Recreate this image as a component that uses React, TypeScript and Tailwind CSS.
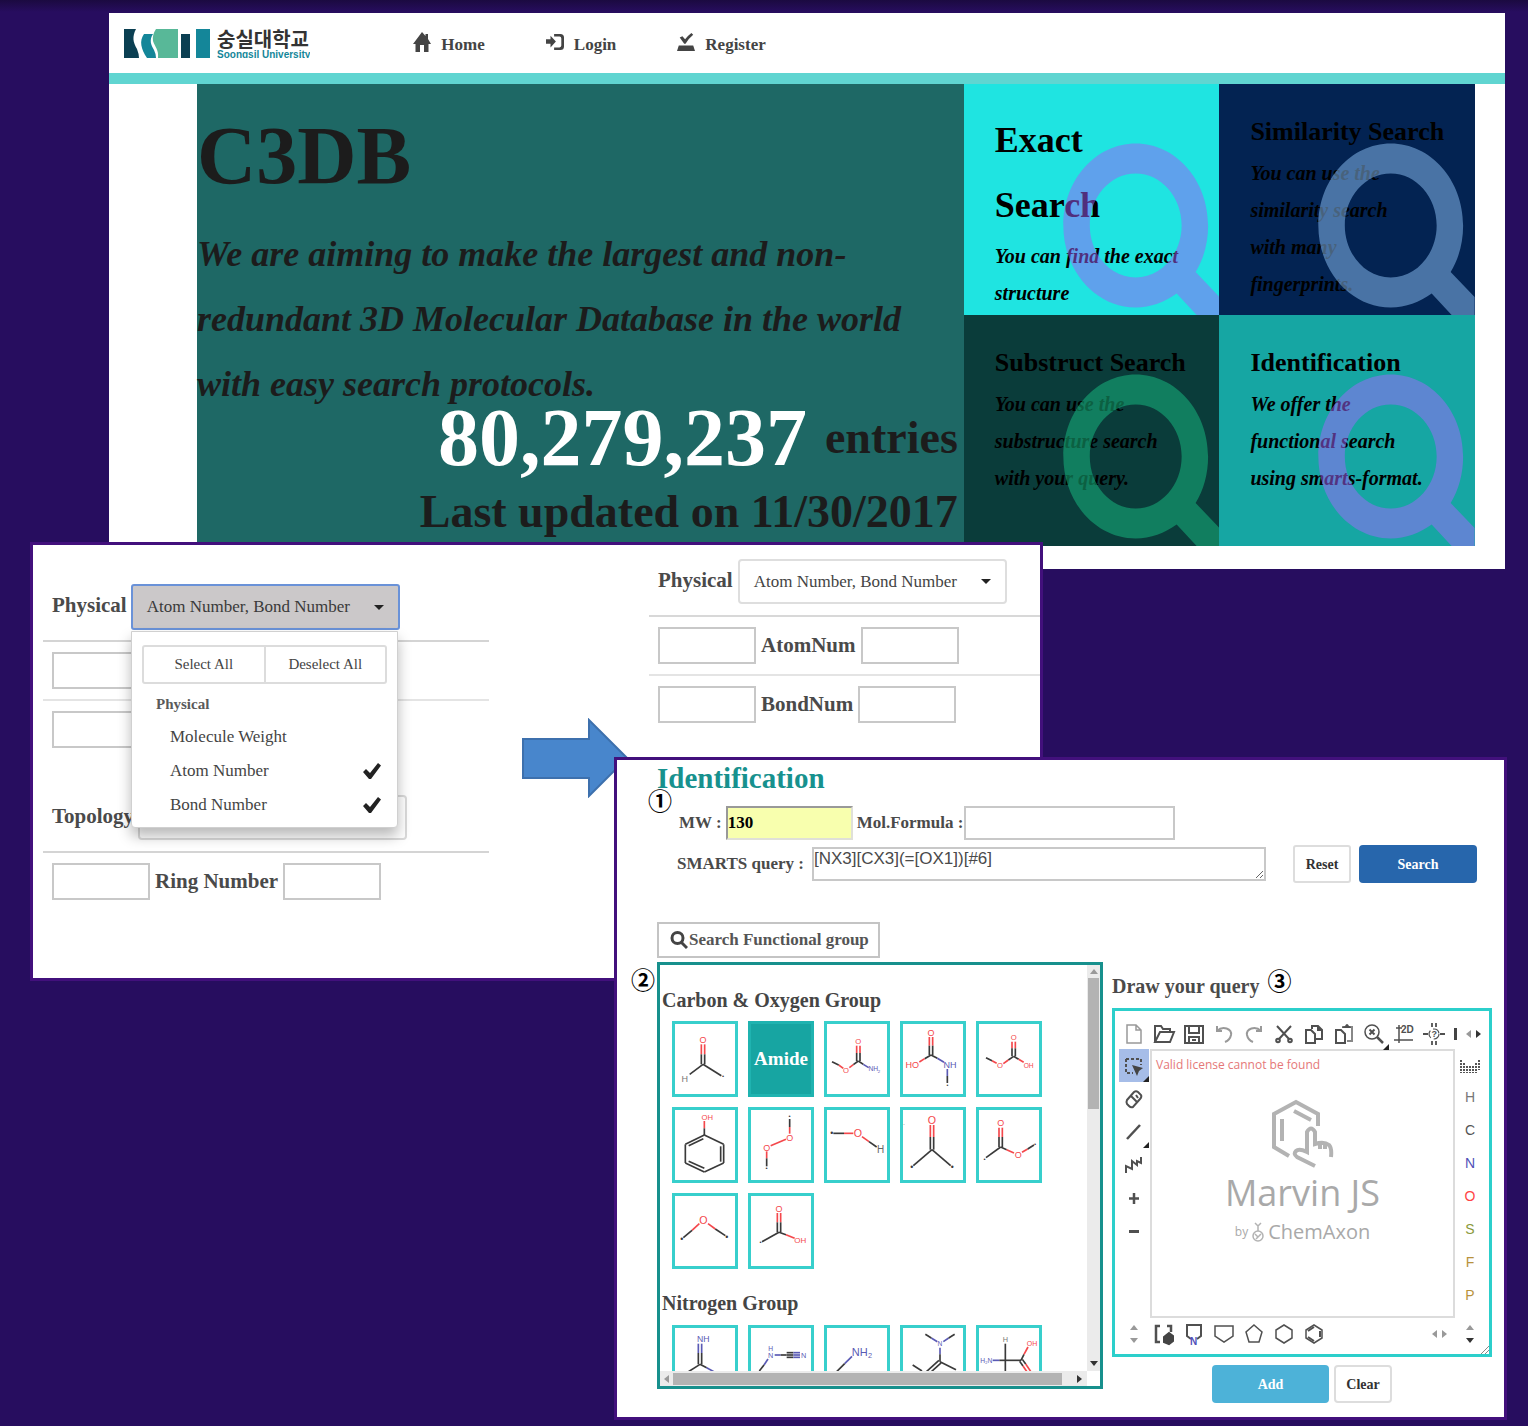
import React from "react";

const RED = "#f4484c";
const INK = "#3a3a3a";
const BLUE = "#5a5ab4";
const serif = "font-['Liberation_Serif','Noto_Sans_CJK_KR',serif]";

type Bond = [number, number, number, number, string, (1 | 2 | 3)?];
type Atom = [number, number, string, string, number?];
type Mol = { bonds: Bond[]; atoms: Atom[] };

const MOLS: Record<string, Mol> = {
  aldehyde: {
    bonds: [[93, 70, 93, 100, RED, 2], [93, 100, 93, 130, INK, 2], [93, 130, 53, 160, INK], [93, 130, 148, 164, INK]],
    atoms: [[93, 56, "O", RED], [38, 172, "H", "#777"], [153, 166, "•", INK, 18]],
  },
  carbamate: {
    bonds: [[103, 74, 103, 96, RED, 2], [103, 96, 103, 120, INK, 2], [103, 120, 88, 131, INK], [88, 131, 76, 140, RED], [58, 142, 44, 132, RED], [44, 132, 24, 122, INK], [103, 120, 118, 130, INK], [118, 130, 134, 140, BLUE]],
    atoms: [[103, 62, "O", RED, 23], [66, 149, "O", RED, 23], [148, 144, "NH", BLUE, 20], [165, 151, "2", BLUE, 13]],
  },
  carbamic: {
    bonds: [[93, 48, 93, 74, RED, 2], [93, 74, 93, 102, INK, 2], [93, 102, 74, 113, INK], [74, 113, 58, 123, RED], [93, 102, 112, 112, INK], [112, 112, 132, 124, BLUE], [142, 144, 142, 165, BLUE], [142, 165, 142, 186, INK]],
    atoms: [[93, 36, "O", RED], [37, 132, "HO", RED], [150, 132, "NH", BLUE], [142, 191, "•", INK, 16]],
  },
  carbonate: {
    bonds: [[113, 62, 113, 82, RED, 2], [113, 82, 113, 106, INK, 2], [113, 106, 97, 117, INK], [97, 117, 82, 128, RED], [62, 127, 48, 119, RED], [48, 119, 30, 110, INK], [113, 106, 128, 115, INK], [128, 115, 143, 124, RED]],
    atoms: [[113, 50, "O", RED, 23], [72, 134, "O", RED, 23], [158, 134, "OH", RED, 20]],
  },
  phenol: {
    bonds: [[97, 42, 97, 64, RED], [97, 64, 97, 84, INK], [97, 84, 155, 112, INK], [155, 112, 155, 168, INK], [155, 168, 97, 195, INK], [97, 195, 40, 168, INK], [40, 168, 40, 112, INK], [40, 112, 97, 84, INK], [94, 95, 50, 116, INK], [146, 118, 146, 164, INK], [50, 163, 97, 184, INK]],
    atoms: [[106, 31, "OH", RED, 23]],
  },
  peroxide: {
    bonds: [[125, 36, 125, 60, INK], [125, 60, 125, 80, RED], [114, 97, 68, 116, RED], [56, 133, 56, 154, RED], [56, 154, 56, 178, INK]],
    atoms: [[125, 92, "O", RED], [56, 121, "O", RED], [125, 27, "•", INK, 18], [56, 184, "•", INK, 18]],
  },
  alcohol: {
    bonds: [[28, 79, 60, 79, INK], [60, 79, 88, 79, RED], [114, 89, 135, 104, RED], [135, 104, 158, 120, INK]],
    atoms: [[102, 79, "O", RED, 32], [170, 128, "H", "#666", 30], [23, 79, "•", INK, 26]],
  },
  ketone: {
    bonds: [[96, 54, 96, 90, RED, 2], [96, 90, 96, 128, INK, 2], [96, 128, 40, 176, INK], [96, 128, 152, 176, INK]],
    atoms: [[96, 38, "O", RED, 32], [35, 180, "•", INK, 26], [157, 180, "•", INK, 26], [12, 52, "·", INK, 18]],
  },
  ester: {
    bonds: [[74, 62, 74, 90, RED, 2], [74, 90, 74, 120, INK, 2], [74, 120, 30, 152, INK], [74, 120, 92, 128, INK], [92, 128, 114, 138, RED], [138, 136, 155, 126, RED], [155, 126, 174, 114, INK]],
    atoms: [[74, 48, "O", RED], [127, 142, "O", RED], [26, 155, "•", INK, 18], [177, 112, "•", INK, 18]],
  },
  ether: {
    bonds: [[82, 92, 60, 112, RED], [60, 112, 34, 134, INK], [108, 92, 130, 108, RED], [130, 108, 160, 128, INK]],
    atoms: [[94, 82, "O", RED, 32], [29, 139, "•", INK, 26], [164, 131, "•", INK, 26]],
  },
  acid: {
    bonds: [[93, 60, 93, 88, RED, 2], [93, 88, 93, 118, INK, 2], [93, 118, 42, 146, INK], [93, 118, 114, 125, INK], [114, 125, 140, 136, RED]],
    atoms: [[93, 46, "O", RED], [157, 142, "OH", RED, 24], [38, 148, "•", INK, 18]],
  },
  imine: {
    bonds: [[84, 56, 84, 84, BLUE, 2], [84, 84, 84, 118, INK, 2], [84, 118, 40, 146, INK], [84, 118, 104, 128, INK], [104, 128, 136, 146, BLUE]],
    atoms: [[94, 42, "NH", BLUE, 26]],
  },
  cyanamide: {
    bonds: [[80, 90, 98, 90, BLUE], [98, 90, 116, 90, INK], [116, 90, 136, 90, INK, 3], [136, 90, 156, 90, BLUE, 3], [60, 102, 48, 120, BLUE], [48, 120, 34, 138, INK]],
    atoms: [[68, 70, "H", BLUE, 20], [68, 90, "N", BLUE, 22], [167, 90, "N", BLUE, 22]],
  },
  amine: {
    bonds: [[84, 94, 62, 116, BLUE], [62, 116, 38, 140, INK]],
    atoms: [[107, 82, "NH", BLUE, 33], [138, 91, "2", BLUE, 22]],
  },
  amidine: {
    bonds: [[112, 50, 94, 39, BLUE], [94, 39, 76, 28, INK], [130, 50, 146, 39, BLUE], [146, 39, 164, 28, INK], [120, 68, 120, 88, BLUE], [120, 88, 120, 110, INK], [120, 110, 168, 134, INK], [120, 110, 80, 146, INK, 2], [38, 120, 66, 138, INK]],
    atoms: [[120, 57, "N", BLUE, 20]],
  },
  aminoacid: {
    bonds: [[88, 56, 88, 146, INK], [50, 106, 70, 106, BLUE], [70, 106, 135, 106, INK], [135, 106, 144, 88, INK], [144, 88, 156, 66, RED], [135, 106, 145, 120, INK, 2], [145, 120, 160, 142, RED, 2]],
    atoms: [[88, 44, "H", "#777", 22], [31, 106, "H₂N", BLUE, 20], [168, 56, "OH", RED, 21]],
  },
};

function Molecule({ mol }: { mol: Mol }) {
  return (
    <svg viewBox="9 9 180 210" className="block size-full" aria-hidden="true">
      {mol.bonds.map(([x1, y1, x2, y2, c, n = 1], i) => {
        const len = Math.hypot(x2 - x1, y2 - y1);
        const nx = (y2 - y1) / len;
        const ny = (x1 - x2) / len;
        const offs = n === 1 ? [0] : n === 2 ? [-5, 5] : [-7, 0, 7];
        return offs.map((o) => (
          <line key={`${i}${o}`} x1={x1 + nx * o} y1={y1 + ny * o} x2={x2 + nx * o} y2={y2 + ny * o} stroke={c} strokeWidth={5} />
        ));
      })}
      {mol.atoms.map(([x, y, t, c, s = 27], i) => (
        <text key={i} x={x} y={y + s * 0.36} fill={c} fontSize={s} fontWeight="normal" fontFamily="Liberation Sans, sans-serif" textAnchor="middle">
          {t}
        </text>
      ))}
    </svg>
  );
}

function GroupGrid({ names }: { names: string[] }) {
  return (
    <div className="ml-[10px] grid w-max grid-cols-5 gap-[10px]">
      {names.map((n) =>
        n === "amide" ? (
          <button key={n} type="button" className="h-[76px] w-[66px] border-3 border-[#1fb3b0] bg-[#17a5a2] text-[19px] font-bold text-white">
            Amide
          </button>
        ) : (
          <button key={n} type="button" aria-label={n} className="h-[76px] w-[66px] border-3 border-[#38cfcc] bg-white">
            <Molecule mol={MOLS[n]} />
          </button>
        ),
      )}
    </div>
  );
}

function Lens({ color }: { color: string }) {
  return (
    <svg viewBox="0 0 256 231" preserveAspectRatio="none" className="pointer-events-none absolute inset-0 size-full" aria-hidden="true">
      <path
        fill={color}
        fillOpacity="0.5"
        fillRule="evenodd"
        d="M172 59.5C212 59.5 244.500 96 244.500 141.500C244.500 159 240 175 232 188L256 213V231H233L213 209.500C201 218 187 223.500 172 223.500C132 223.500 99.500 187 99.500 141.500C99.500 96 132 59.500 172 59.500ZM172 89.500C146.500 89.500 126 113 126 141.500C126 170 146.500 193.500 172 193.500C197.500 193.500 218 170 218 141.500C218 113 197.500 89.500 172 89.500Z"
      />
    </svg>
  );
}

function Tile({ bg, lens, title, big, lines }: { bg: string; lens: string; title: string; big?: boolean; lines: string[] }) {
  return (
    <a href="#search" className={`relative block overflow-hidden pt-6 pl-[31px] text-black ${bg}`}>
      <h2 className={big ? "w-32 text-[36px] leading-[65px] font-bold" : "text-[26px] leading-[47px] font-bold whitespace-nowrap"}>{title}</h2>
      <p className="text-[20px] leading-[37px] font-bold whitespace-nowrap italic">
        {lines.map((l) => (
          <span key={l} className="block">{l}</span>
        ))}
      </p>
      <Lens color={lens} />
    </a>
  );
}

function Hero() {
  return (
    <section className="mr-[23px] ml-[109px] bg-white pb-[23px]">
      <header className="flex h-[60px] items-center pl-[15px]">
        <a href="#top" className="flex items-start gap-[7px]">
          <svg viewBox="0 0 86 29" className="h-[29px] w-[86px]" aria-hidden="true">
            <path d="M0 0H12C8 8 9 13 13 20Q15 25 15 29H0Z" fill="#0b3f52" />
            <path d="M20 5H29C25 11 27 16 30 21Q32 25 32 29H23C17 20 15 12 20 5Z" fill="#148699" />
            <path d="M32 0H54V29H34C35 21 31 18 29 12Q28 6 32 0Z" fill="#58b898" />
            <path d="M57 5H66V29H57Z" fill="#0b3f52" />
            <path d="M72 0H86V29H72Z" fill="#148699" />
          </svg>
          <span className="block h-[29px] overflow-hidden">
            <span className="block font-['Noto_Sans_CJK_KR',sans-serif] text-[20px] leading-[19px] font-bold text-[#333]">숭실대학교</span>
            <span className="block font-['Liberation_Sans',sans-serif] text-[10px] leading-[14px] font-bold text-[#148699]">Soongsil University</span>
          </span>
        </a>
        <nav className="ml-[103px] flex gap-[61px] pt-[3px] text-[17px] font-bold text-[#444]">
          <a href="#home" className="flex items-center gap-[10px]">
            <svg viewBox="0 0 18 20" className="-mt-[5px] h-5 w-[18px]" fill="#444" aria-hidden="true">
              <path d="M9 0L12.500 4V2H15V7L18 12H15.500V20H11V13H7V20H2.500V12H0Z" />
            </svg>
            Home
          </a>
          <a href="#login" className="flex items-center gap-[10px]">
            <svg viewBox="0 0 20 20" className="-mt-[5px] h-[18px] w-[18px]" fill="#444" aria-hidden="true">
              <path d="M0 7H5V3L11 9.500L5 16V12H0ZM9 1H16Q20 1 20 5V15Q20 19 16 19H9V16H15Q17 16 17 14V6Q17 4 15 4H9Z" />
            </svg>
            Login
          </a>
          <a href="#register" className="flex items-center gap-[10px]">
            <svg viewBox="0 0 20 20" className="-mt-[5px] h-5 w-[18px]" fill="#444" aria-hidden="true">
              <path d="M3 5L6 3.500L9 7Q12 3 16 0L18 2Q13 6 9.500 12H8ZM2 14H18L20 20H0Z" />
            </svg>
            Register
          </a>
        </nav>
      </header>
      <div className="h-[11px] bg-[#60d5d1]" />
      <div className="mr-[30px] ml-[88px] grid grid-cols-[3fr_1fr_1fr] grid-rows-[231px_231px]">
        <div className="row-span-2 bg-[#1e6865] text-[#1c1c1c]">
          <h1 className="pt-[6px] text-[82px] leading-[132px] font-bold">C3DB</h1>
          <p className="text-[36px] leading-[65px] font-bold italic">
            We are aiming to make the largest and non-
            <br />
            redundant 3D Molecular Database in the world
            <br />
            with easy search protocols.
          </p>
          <div className="-mt-[24px] pr-[6px] text-right text-[46px] font-bold">
            <p className="flex items-center justify-end gap-[18px] leading-[90px]">
              <span className="text-[82px] text-white">80,279,237</span> entries
            </p>
            <p className="leading-[58px]">Last updated on 11/30/2017</p>
          </div>
        </div>
        <Tile bg="bg-[#1fe4e1]" lens="#a05ef7" title="Exact Search" big lines={["You can find the exact", "structure"]} />
        <Tile bg="bg-[#032352]" lens="#8fc3f8" title="Similarity Search" lines={["You can use the", "similarity search", "with many", "fingerprints."]} />
        <Tile bg="bg-[#0a3c3a]" lens="#18c084" title="Substruct Search" lines={["You can use the", "substructure search", "with your query."]} />
        <Tile bg="bg-[#16a6a3]" lens="#a466ff" title="Identification" lines={["We offer the", "functional search", "using smarts-format."]} />
      </div>
    </section>
  );
}

function Caret() {
  return (
    <svg viewBox="0 0 10 5" className="h-[5px] w-[10px]" aria-hidden="true">
      <path d="M0 0H10L5 5Z" fill="#222" />
    </svg>
  );
}

function NumBox({ label }: { label: string }) {
  return <input aria-label={label} className="h-[37px] w-[98px] border-2 border-[#c8c8c8] bg-white" />;
}

function RangeRow({ label, line, single }: { label: string; line?: boolean; single?: boolean }) {
  return (
    <div className={`flex items-center gap-[5px] py-[10px] pl-[9px] ${line ? "border-b-2 border-[#e4e4e4]" : ""}`}>
      <NumBox label={`${label} from`} />
      {!single && (
        <>
          <span className="text-[21px] font-bold text-[#4a4a4a]">{label}</span>
          <NumBox label={`${label} to`} />
        </>
      )}
    </div>
  );
}

function Tick() {
  return (
    <svg viewBox="0 0 18 16" className="h-4 w-[18px]" aria-hidden="true">
      <path d="M0 9L3 6L7 10L15 0L18 2.500L8 16H6Z" fill="#222" />
    </svg>
  );
}

function FilterPanel() {
  return (
    <section className="relative mr-[485px] -mt-[27px] ml-[30px] flex h-[439px] border-3 border-[#42107c] bg-white">
      <div className="ml-[10px] w-[446px]">
        <div className="relative flex items-center gap-1 border-b-2 border-[#d4d4d4] pt-[39px] pb-[10px] pl-[9px]">
          <span className="pb-[2px] text-[21px] font-bold text-[#4a4a4a]">Physical</span>
          <button type="button" aria-expanded="true" className="flex h-[46px] w-[269px] items-center justify-between rounded-[3px] border-2 border-[#6a92d8] bg-[#cbc8c9] px-[14px] text-[17px] text-[#3a3a3a]">
            Atom Number, Bond Number <Caret />
          </button>
          <div className="absolute top-[86px] left-[88px] z-10 h-[197px] w-[267px] rounded-b-[4px] border border-[#d0d0d0] bg-white pt-[13px] text-[#444] shadow-[0_8px_14px_rgba(0,0,0,0.28)]">
            <div className="mx-[10px] flex rounded-[3px] border-2 border-[#dcdcdc] text-[15px]">
              <button type="button" className="h-[35px] flex-1 border-r-2 border-[#dcdcdc]">Select All</button>
              <button type="button" className="h-[35px] flex-1">Deselect All</button>
            </div>
            <p className="mt-[9px] pl-6 text-[15px] leading-[22px] font-bold text-[#5a5a5a]">Physical</p>
            <ul className="mt-[5px] pr-[16px] pl-[38px] text-[17px] leading-[34px]">
              <li>Molecule Weight</li>
              <li className="flex items-center justify-between">Atom Number <Tick /></li>
              <li className="flex items-center justify-between">Bond Number <Tick /></li>
            </ul>
          </div>
        </div>
        <RangeRow label="Atom number" line single />
        <RangeRow label="Bond number" single />
        <div className="flex items-center gap-1 border-b-2 border-[#d4d4d4] pt-[37px] pb-[11px] pl-[9px]">
          <span className="pb-[2px] text-[21px] font-bold text-[#4a4a4a]">Topology</span>
          <button type="button" aria-label="Topology options" className="h-[45px] w-[269px] rounded-[4px] border-2 border-[#dadada] bg-white" />
        </div>
        <RangeRow label="Ring Number" />
      </div>
      <svg viewBox="0 0 106 80" className="mt-[173px] ml-[33px] h-20 w-[106px]" aria-hidden="true">
        <path d="M1 21H67V2L105 40L67 78V60H1Z" fill="#4886cc" stroke="#3d70ad" strokeWidth="2" />
      </svg>
      <div className="ml-[21px] flex-1">
        <div className="flex items-center gap-[5px] border-b-2 border-[#d8d8d8] pt-[14px] pb-[11px] pl-[9px]">
          <span className="pb-[2px] text-[21px] font-bold text-[#4a4a4a]">Physical</span>
          <button type="button" className="flex h-[45px] w-[269px] items-center justify-between rounded-[4px] border-2 border-[#dedede] bg-white px-[14px] text-[17px] text-[#444]">
            Atom Number, Bond Number <Caret />
          </button>
        </div>
        <RangeRow label="AtomNum" line />
        <RangeRow label="BondNum" />
      </div>
    </section>
  );
}

function Arrow({ dir, dark }: { dir: "u" | "d" | "l" | "r"; dark?: boolean }) {
  const d = { u: "M0 6H8L4 1Z", d: "M0 2H8L4 7Z", l: "M6 0V8L1 4Z", r: "M2 0V8L7 4Z" }[dir];
  return (
    <svg viewBox="0 0 8 8" className="size-2" aria-hidden="true">
      <path d={d} fill={dark ? "#333" : "#999"} />
    </svg>
  );
}

function GroupList() {
  return (
    <div className="grid h-[427px] w-[446px] grid-cols-[1fr_13px] grid-rows-[1fr_15px] border-3 border-[#17908d]">
      <div className="overflow-hidden pt-[23px] pl-[2px] text-[20px] leading-6 font-bold text-[#454545]">
        <h3 className="mb-[9px]">Carbon &amp; Oxygen Group</h3>
        <GroupGrid names={["aldehyde", "amide", "carbamate", "carbamic", "carbonate", "phenol", "peroxide", "alcohol", "ketone", "ester", "ether", "acid"]} />
        <h3 className="mt-[22px] mb-[10px]">Nitrogen Group</h3>
        <GroupGrid names={["imine", "cyanamide", "amine", "amidine", "aminoacid"]} />
      </div>
      <div className="flex flex-col items-center bg-[#ebebeb]">
        <span className="grid h-[13px] place-items-center"><Arrow dir="u" /></span>
        <span className="h-[131px] w-[11px] bg-[#b3b3b3]" />
        <span className="mt-auto mb-1"><Arrow dir="d" dark /></span>
      </div>
      <div className="flex items-center bg-[#ebebeb]">
        <span className="grid w-[13px] place-items-center"><Arrow dir="l" /></span>
        <span className="h-3 w-[389px] bg-[#b3b3b3]" />
        <span className="mr-1 ml-auto"><Arrow dir="r" dark /></span>
      </div>
    </div>
  );
}

function Tool({ label, children, on, corner }: { label: string; children: React.ReactNode; on?: boolean; corner?: boolean }) {
  return (
    <button type="button" aria-label={label} className={`relative grid h-[33px] w-[30px] shrink-0 place-items-center ${on ? "bg-[#a6bde8]" : ""}`}>
      <svg viewBox="0 0 24 24" className="size-6" fill="none" stroke="#505050" strokeWidth="2" aria-hidden="true">
        {children}
      </svg>
      {corner && <span className="absolute right-0 bottom-0 size-[6px] bg-[#222] [clip-path:polygon(100%_0,100%_100%,0_100%)]" />}
    </button>
  );
}

const elements: [string, string][] = [
  ["H", "text-[#777]"],
  ["C", "text-[#555]"],
  ["N", "text-[#5050b8]"],
  ["O", "text-[#f44]"],
  ["S", "text-[#8a9a3c]"],
  ["F", "text-[#b8923c]"],
  ["P", "text-[#b8923c]"],
];

function Sketcher() {
  return (
    <div className="relative grid h-[349px] w-[380px] grid-cols-[31px_1fr_30px] grid-rows-[38px_1fr_36px] border-3 border-[#2ccfcb] px-1">
      <div className="col-span-3 flex items-center pt-[7px]">
        <Tool label="New"><path d="M5 3H14L19 8V21H5ZM14 3V8H19" stroke="#999" strokeWidth="1.500" /></Tool>
        <Tool label="Open"><path d="M3 20V4H9L11 7H18V10M3 20L8 10H22L18 20Z" /></Tool>
        <Tool label="Save"><path d="M3 4H21V21H3ZM7 4V11H17V4M7 21V15H17V21M10 18H14" /></Tool>
        <Tool label="Undo"><path d="M5 4V9H10M5 9C11 3 20 7 19 13Q18 18 13 20" stroke="#999" /></Tool>
        <Tool label="Redo"><path d="M19 4V9H14M19 9C13 3 4 7 5 13Q6 18 11 20" stroke="#999" /></Tool>
        <Tool label="Cut"><path d="M5 4L17 17M19 4L7 17" /><circle cx="6" cy="18.500" r="1.800" /><circle cx="18" cy="18.500" r="1.800" /></Tool>
        <Tool label="Copy"><path d="M4 8H9L13 12V21H4ZM10 7V4H16L20 8V17H14M16 4V8H20" /></Tool>
        <Tool label="Paste"><path d="M4 8H9L13 12V21H4Z" /><path d="M8 5V5M10 5H20V19H15" stroke="#888" /><path d="M10 6Q11 4 13 4Q15 0 17 4Q19 4 19 6Z" fill="#505050" stroke="none" /></Tool>
        <Tool label="Zoom" corner><circle cx="10" cy="10" r="7" strokeWidth="1.500" /><path d="M7.500 7.500L12.500 12.500M12.500 7.500L7.500 12.500" /><path d="M15 15L21 21" strokeWidth="2.500" /></Tool>
        <Tool label="Clean 2D"><path d="M7 3V21M2 18H21M4 6H10" strokeWidth="1.500" /><text x="9" y="11" fontSize="10" fontFamily="Liberation Sans" fontWeight="bold" fill="#505050" stroke="none">2D</text></Tool>
        <Tool label="Check"><circle cx="12" cy="12" r="5" strokeWidth="1.200" strokeDasharray="8 3" /><path d="M1 12H6M18 12H23M10 1V5M14 1V5M10 19V23M14 19V23" strokeWidth="1.800" /><text x="9.500" y="15" fontSize="9" fontFamily="Liberation Sans" fill="#505050" stroke="none">?</text></Tool>
        <span className="ml-[5px] h-3 w-[3px] bg-[#444]" />
        <span className="ml-2 flex gap-[1px]"><Arrow dir="l" /><Arrow dir="r" dark /></span>
      </div>
      <div className="flex flex-col">
        <Tool label="Select" on corner><path d="M4 5H19V11M4 5V19H11" strokeDasharray="3 2" /><path d="M10 11L21 14L17 17L15 22Z" fill="#444" stroke="none" /></Tool>
        <Tool label="Erase"><path d="M5 13L12 5Q14 3.500 16 5L19 8Q20 10 18 12L11 20Q9 21 7 19L5 17Q4 15 5 13ZM9 9L15 15M14 8L16 11" /></Tool>
        <Tool label="Bond" corner><path d="M5 19L18 5" strokeWidth="2.500" /></Tool>
        <Tool label="Chain"><path d="M4 20V13L10 16V8L15 12V8L19 10V4" /></Tool>
        <Tool label="Increase charge"><path d="M12 7V18M7 12.500H17" strokeWidth="2.500" /></Tool>
        <Tool label="Decrease charge"><path d="M7 12.500H17" strokeWidth="3" /></Tool>
      </div>
      <div className="flex flex-col border-2 border-[#dcdcdc] font-['Open_Sans','Noto_Sans',sans-serif] font-normal">
        <p className="pl-1 text-[12px] leading-[28px] text-[#e57878]">Valid license cannot be found</p>
        <div className="mt-5 flex flex-col items-center text-[#a9a9a9]">
          <svg viewBox="0 0 62 70" className="h-[70px] w-[62px]" fill="none" stroke="#b3b3b3" strokeWidth="4" aria-hidden="true">
            <path d="M46 27V15L24 3L2 15V48L17 57M10 20V42M22 12L39 21" />
            <path d="M43 67L25 58Q21 55 24 52Q27 49 35 53V33Q39 26 43 33V45Q52 42 57 46Q60 49 59 58M48 44V50M53 44V50" />
          </svg>
          <p className="text-[36px] leading-[48px]">Marvin JS</p>
          <p className="flex items-center gap-1 text-[20px] leading-[30px]">
            <span className="text-[12px]">by</span>
            <svg viewBox="0 0 12 20" className="h-5 w-3" fill="none" stroke="#b3b3b3" strokeWidth="1.500" aria-hidden="true">
              <path d="M3 1L6 4L9 1M6 3V9" />
              <circle cx="6" cy="14" r="5" />
              <path d="M3 12L6 15L9 12M4 17L8 13" />
            </svg>
            ChemAxon
          </p>
        </div>
      </div>
      <div className="flex flex-col items-center font-['Liberation_Sans',sans-serif] text-[14px] font-normal">
        <svg viewBox="0 0 20 14" className="mt-[10px] mb-2 h-[14px] w-5" aria-hidden="true">
          <path d="M1 1V14M4 4V14M7 7V14M10 7V14M13 7V14M16 4V14M19 1V11" stroke="#555" strokeWidth="2" strokeDasharray="2 1" />
        </svg>
        {elements.map(([e, c]) => (
          <button key={e} type="button" className={`h-[33px] ${c}`}>{e}</button>
        ))}
      </div>
      <div className="col-span-3 flex items-center pb-1">
        <span className="flex w-[30px] flex-col items-center gap-1"><Arrow dir="u" /><Arrow dir="d" /></span>
        <Tool label="Group"><path d="M8 4H4V20H8M15 4H19V10" strokeWidth="2.500" /><path d="M12 15L17 11L21 14V19L17 22L12 20Z" fill="#444" stroke="#444" /></Tool>
        <Tool label="Pyrrole"><path d="M9 17L5 14V3H19V14L15 17" /><text x="8" y="23" fontSize="10" fontFamily="Liberation Sans" fontWeight="bold" fill="#5050b8" stroke="none">N</text></Tool>
        <Tool label="Cyclopentane"><path d="M3 4H21V14L12 20L3 14Z" strokeWidth="1.500" /></Tool>
        <Tool label="Pentagon"><path d="M12 3L20 10L17 20H7L4 10Z" strokeWidth="1.500" /></Tool>
        <Tool label="Cyclohexane"><path d="M12 3L20 8V16L12 21L4 16V8Z" strokeWidth="1.500" /></Tool>
        <Tool label="Benzene"><path d="M12 3L20 8V16L12 21L4 16V8Z" strokeWidth="1.500" /><path d="M18 9V15M12 19L6 15M6 9L12 5" /></Tool>
        <span className="mr-[7px] ml-auto flex gap-[1px]"><Arrow dir="l" /><Arrow dir="r" /></span>
        <span className="flex w-[30px] flex-col items-center gap-1"><Arrow dir="u" /><Arrow dir="d" dark /></span>
      </div>
      <svg viewBox="0 0 8 8" className="absolute right-0 bottom-0 size-2" stroke="#888" aria-hidden="true">
        <path d="M0 8L8 0M4 8L8 4" />
      </svg>
    </div>
  );
}

function IdentificationPanel() {
  return (
    <section className="relative -mt-[224px] mr-[21px] ml-[614px] border-3 border-[#42107c] bg-white pr-3 pb-[14px] pl-10 font-bold text-[#4a4a4a]">
      <h2 className="text-[29px] leading-9 text-[#17918e]">Identification</h2>
      <span className="absolute top-[29px] left-[31px] text-[24px] leading-[26px] text-black">①</span>
      <span className="absolute top-[208px] left-[14px] text-[24px] leading-[26px] text-black">②</span>
      <div className="mt-[10px] flex items-center pl-[22px] text-[17px]">
        <label htmlFor="mw">MW :</label>
        <input id="mw" defaultValue="130" className="mr-1 ml-1 h-[34px] w-[127px] border-2 border-[#e0e0d8] border-t-[#999] border-l-[#999] bg-[#f8ffae] text-[17px] text-black" />
        <label htmlFor="formula">Mol.Formula :</label>
        <input id="formula" className="ml-px h-[34px] w-[211px] border-2 border-[#c8c8c8]" />
      </div>
      <div className="mt-[5px] flex items-center pl-5 text-[17px]">
        <label htmlFor="smarts">SMARTS query :</label>
        <textarea id="smarts" defaultValue="[NX3][CX3](=[OX1])[#6]" className="ml-2 h-[34px] w-[454px] border-2 border-[#c8c8c8] font-['Liberation_Sans',sans-serif] text-[17px] leading-5 font-normal" />
        <button type="button" className="ml-auto h-[38px] w-[58px] rounded-[3px] border-2 border-[#ddd] text-[14px] text-[#333]">Reset</button>
        <button type="button" className="mr-[15px] ml-2 h-[38px] w-[118px] rounded-[4px] bg-[#2766ac] text-[14px] text-white">Search</button>
      </div>
      <button type="button" className="mt-[39px] flex h-9 w-[223px] items-center border-2 border-[#c4c4c4] pl-[11px] text-[17px] text-[#555]">
        <svg viewBox="0 0 18 20" className="mr-px h-5 w-[18px] shrink-0" fill="none" stroke="#444" strokeWidth="3" aria-hidden="true">
          <circle cx="7.500" cy="8" r="5.500" />
          <path d="M11 12L17 18" />
        </svg>
        Search Functional group
      </button>
      <div className="mt-1 flex items-start justify-between">
        <GroupList />
        <div>
          <h3 className="mt-2 mb-[6px] flex items-center gap-2 text-[20px] leading-8">
            Draw your query <span className="-mt-2 text-[24px] leading-6 text-black">③</span>
          </h3>
          <Sketcher />
          <div className="mt-2 flex gap-[5px] pl-[100px] text-[14px]">
            <button type="button" className="h-[38px] w-[117px] rounded-[4px] bg-[#4db2d8] text-white">Add</button>
            <button type="button" className="h-[38px] w-[58px] rounded-[4px] border-2 border-[#ddd] text-[#333]">Clear</button>
          </div>
        </div>
      </div>
    </section>
  );
}

export default function App() {
  return (
    <main className={`min-h-screen bg-[#270d5f] bg-[linear-gradient(#1b0a40,#270d5f_12px)] pt-[13px] ${serif}`}>
      <Hero />
      <FilterPanel />
      <IdentificationPanel />
    </main>
  );
}
